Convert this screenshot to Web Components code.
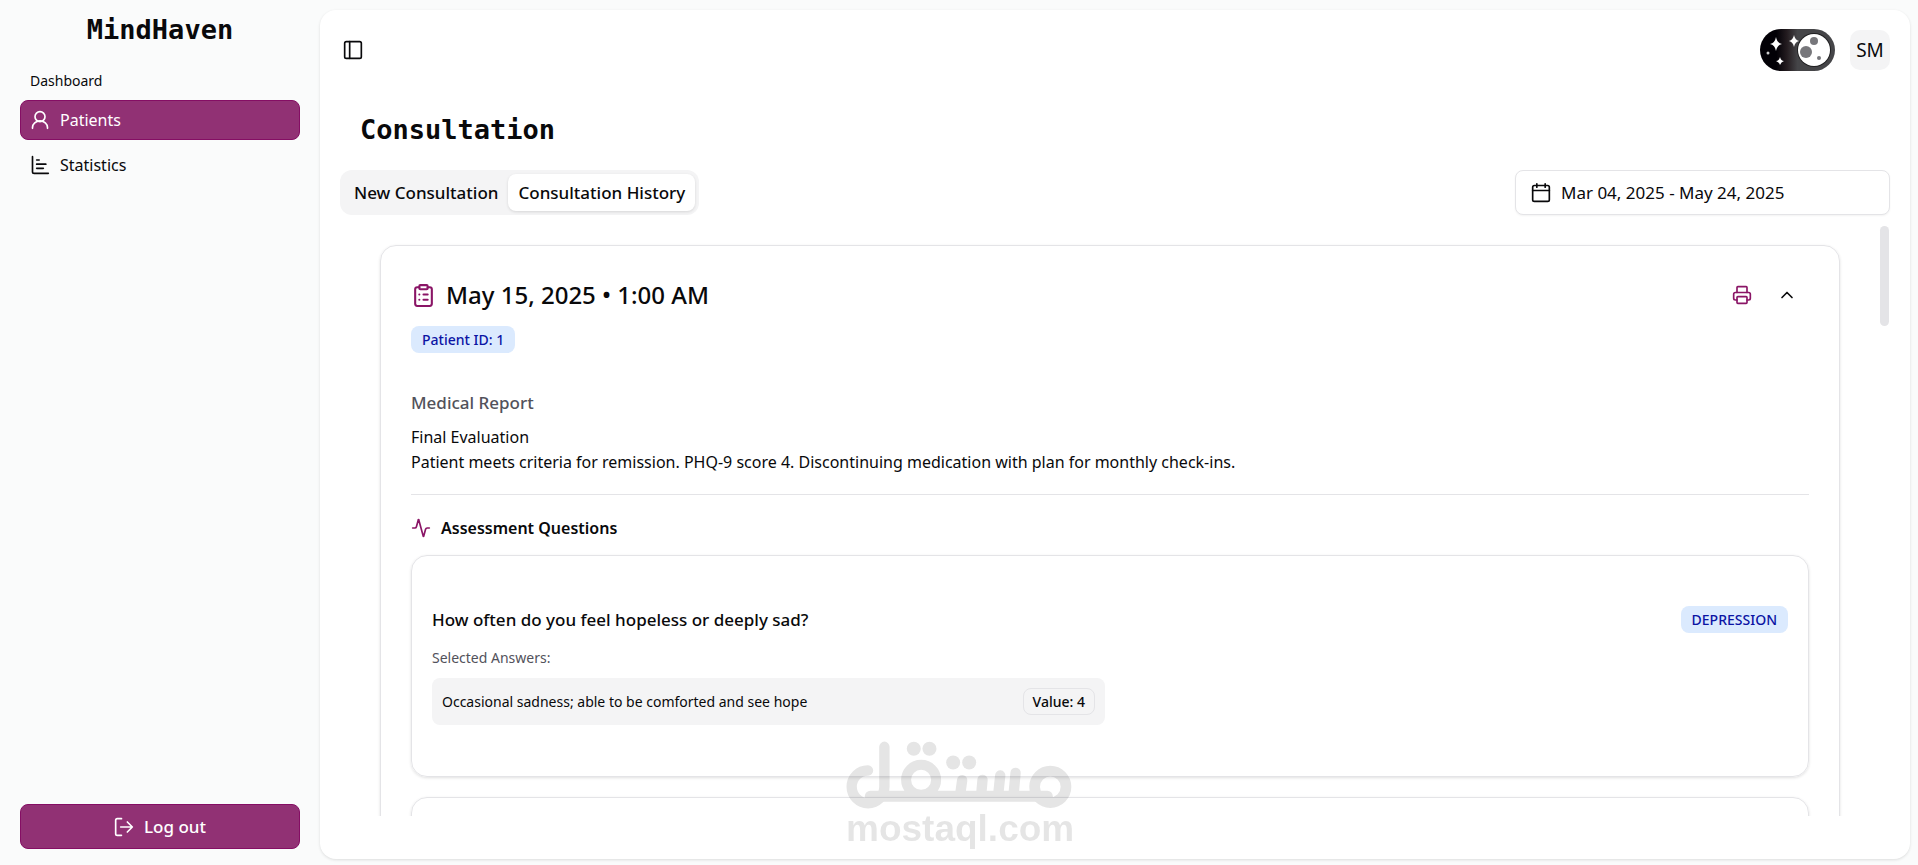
<!DOCTYPE html>
<html lang="en">
<head>
<meta charset="utf-8">
<meta name="viewport" content="width=device-width, initial-scale=1">
<title>MindHaven – Consultation</title>
<style>
  :root {
    --brand: #913174;
    --brand-edge: #850e64;
    --brand-ink: #8a1566;
    --ink: #09090b;
    --muted: #52525b;
    --line: #e4e4e7;
    --soft: #f4f4f5;
    --badge-bg: #dbeafe;
    --badge-ink: #0b14a4;
    --text: 17px;
    --body: 16px;
    --small: 14px;
    --mono: "DejaVu Sans Mono", monospace;
    --shadow: 0 1px 3px rgba(0, 0, 0, .12);
  }
  body {
    margin: 0;
    background: #fafbfb;
    color: var(--ink);
    font: 400 var(--text)/24px "Noto Sans", "Open Sans", sans-serif;
  }
</style>
</head>
<body>
<mh-app>
  <mh-sidebar slot="sidebar">
    <mh-nav-item icon="user" active>Patients</mh-nav-item>
    <mh-nav-item icon="chart">Statistics</mh-nav-item>
  </mh-sidebar>
  <mh-topbar slot="top" initials="SM"></mh-topbar>
  <mh-heading slot="top">Consultation</mh-heading>
  <mh-toolbar slot="top">
    <mh-tab>New Consultation</mh-tab>
    <mh-tab selected>Consultation History</mh-tab>
    <mh-date-range slot="end">Mar 04, 2025 - May 24, 2025</mh-date-range>
  </mh-toolbar>
  <mh-scroll-area>
    <mh-consultation>
      <span slot="title">May 15, 2025 • 1:00 AM</span>
      <mh-badge slot="patient">Patient ID: 1</mh-badge>
      <span slot="report">Final Evaluation<br>Patient meets criteria for remission. PHQ-9 score 4. Discontinuing medication with plan for monthly check-ins.</span>
      <mh-question>
        <span slot="question">How often do you feel hopeless or deeply sad?</span>
        <mh-badge slot="topic">DEPRESSION</mh-badge>
        <mh-answer>Occasional sadness; able to be comforted and see hope<mh-badge slot="value" outline>Value: 4</mh-badge></mh-answer>
      </mh-question>
      <mh-question></mh-question>
    </mh-consultation>
  </mh-scroll-area>
</mh-app>
<mh-watermark>mostaql.com</mh-watermark>

<script>
const icons = {
  user: '<circle cx="12" cy="8" r="6"/><path d="M21 22v-1a9 8 0 0 0-18 0v1"/>',
  chart: '<path d="M3 2v18a2 2 0 0 0 2 2h17"/><path d="M8 6h3M8 11h11M8 16h8"/>',
  panel: '<rect x="2" y="2" width="20" height="20" rx="2"/><path d="M8 2v20"/>',
  logout: '<path d="M9 2H4a2 2 0 0 0-2 2v16a2 2 0 0 0 2 2h5"/><path d="M16 6l6 6-6 6M22 12H8"/>',
  calendar: '<path d="M7 1v4M17 1v4"/><rect x="2" y="3" width="20" height="19" rx="2"/><path d="M2 9h20"/>',
  clipboard: '<rect x="8" y="2" width="8" height="4" rx="1"/><path d="M16 4h2a2 2 0 0 1 2 2v14a2 2 0 0 1-2 2H6a2 2 0 0 1-2-2V6a2 2 0 0 1 2-2h2"/><path d="M12 11h4M12 16h4M8 11h.01M8 16h.01"/>',
  printer: '<path d="M6 18H4a2 2 0 0 1-2-2v-5a2 2 0 0 1 2-2h16a2 2 0 0 1 2 2v5a2 2 0 0 1-2 2h-2"/><path d="M6 9V3a1 1 0 0 1 1-1h10a1 1 0 0 1 1 1v6"/><rect x="6" y="14" width="12" height="8" rx="1"/>',
  chevron: '<path d="M18 15l-6-6-6 6"/>',
  pulse: '<path d="M22 12h-2.500a2 2 0 0 0-2 1.500L15.200 21.800a.25.25 0 0 1-.5 0L9.300 2.200a.25.25 0 0 0-.5 0L6.500 10.500A2 2 0 0 1 4.500 12H2"/>'
};

function define(name, html, setup) {
  const template = document.createElement('template');
  template.innerHTML = html;
  customElements.define(name, class extends HTMLElement {
    constructor() {
      super();
      this.attachShadow({ mode: 'open' }).append(template.content.cloneNode(true));
    }
    connectedCallback() { if (setup) setup(this, this.shadowRoot); }
  });
}

define('mh-icon', `
  <style>
    :host { display: block; flex: none; width: 20px; height: 20px; }
    svg { display: block; width: 100%; height: 100%; }
  </style>
  <svg viewBox="0 0 24 24" fill="none" stroke="currentColor" stroke-width="2" stroke-linecap="round" stroke-linejoin="round" aria-hidden="true"></svg>`,
  (host, root) => { root.querySelector('svg').innerHTML = icons[host.getAttribute('name')]; });

define('mh-badge', `
  <style>
    :host { display: inline-block; flex: none; box-sizing: border-box; padding: 3px 11px; border-radius: 8px;
      background: var(--badge-bg); color: var(--badge-ink); font-size: var(--small); font-weight: 500; line-height: 21px; white-space: nowrap; }
    :host([outline]) { padding: 2px 9px; border: 1px solid var(--line); background: none; color: var(--ink); }
  </style><slot></slot>`);

define('mh-app', `
  <style>
    :host { display: grid; grid-template-columns: 320px minmax(0, 1fr); height: 100vh; }
    main { display: flex; flex-direction: column; min-height: 0; margin: 10px 8px 6px 0; padding: 0 20px 43px;
      border-radius: 16px; background: #fff; box-shadow: var(--shadow); }
  </style>
  <slot name="sidebar"></slot>
  <main><slot name="top"></slot><slot></slot></main>`);

define('mh-sidebar', `
  <style>
    :host { display: flex; flex-direction: column; padding: 11px 20px 16px; }
    .brand { font: 700 27px/38px var(--mono); text-align: center; }
    .label { margin: 22px 10px 9px; font-size: var(--small); line-height: 20px; }
    nav { display: grid; gap: 5px; flex: 1; align-content: start; }
    button { display: flex; align-items: center; justify-content: center; gap: 10px; height: 45px; border: 1px solid var(--brand-edge);
      border-radius: 8px; background: var(--brand); color: #fff; font: inherit; font-weight: 500; }
  </style>
  <div class="brand">MindHaven</div>
  <div class="label">Dashboard</div>
  <nav><slot></slot></nav>
  <button type="button"><mh-icon name="logout"></mh-icon>Log out</button>`);

define('mh-nav-item', `
  <style>
    :host { display: block; }
    a { display: flex; align-items: center; gap: 10px; box-sizing: border-box; height: 40px; padding: 0 9px; border: 1px solid transparent;
      border-radius: 8px; color: inherit; font-size: var(--body); text-decoration: none; }
    :host([active]) a { border-color: var(--brand-edge); background: var(--brand); color: #fff; }
  </style>
  <a href="#"><mh-icon></mh-icon><span><slot></slot></span></a>`,
  (host, root) => {
    const icon = root.querySelector('mh-icon');
    icon.setAttribute('name', host.getAttribute('icon'));
    icon.shadowRoot.querySelector('svg').innerHTML = icons[host.getAttribute('icon')];
  });

define('mh-theme-switch', `
  <style>
    :host, label { display: block; position: relative; width: 75px; height: 42px; }
    input { position: absolute; inset: 0; width: 100%; height: 100%; margin: 0; opacity: 0; }
    svg { display: block; }
  </style>
  <label>
    <input type="checkbox" role="switch" aria-label="Dark theme" checked>
    <svg width="75" height="42" viewBox="0 0 75 42" aria-hidden="true">
      <defs>
        <linearGradient id="night"><stop offset=".22" stop-color="#020006"/><stop offset=".36" stop-color="#241c20"/><stop offset=".5" stop-color="#454548"/><stop offset="1" stop-color="#454548"/></linearGradient>
      </defs>
      <rect width="75" height="42" rx="21" fill="url(#night)"/>
      <circle cx="54" cy="21" r="17" fill="#202022"/>
      <circle cx="54" cy="21" r="16" fill="#fff"/>
      <g fill="#77777b"><circle cx="46" cy="23" r="6"/><circle cx="54" cy="12" r="4"/><circle cx="59" cy="29" r="2"/></g>
      <g fill="#fff"><path d="M16 8q1 6 6 7-5 1-6 7-1-6-6-7 5-1 6-7z"/><path d="M34 6q1 5 5 6-4 1-5 6-1-5-5-6 4-1 5-6z"/><path d="M20 28q1 4 4 4-3 1-4 4-1-3-4-4 3 0 4-4z"/><circle cx="8" cy="24" r="1.500" opacity=".8"/></g>
    </svg>
  </label>`);

define('mh-topbar', `
  <style>
    :host { display: flex; align-items: center; gap: 15px; margin-top: 19px; }
    button { border: 0; background: none; color: inherit; font: inherit; }
    .panel { margin-right: auto; padding: 3px; }
    .avatar { width: 40px; height: 40px; padding: 0; border-radius: 10px; background: var(--soft); font-size: 19px; }
  </style>
  <button class="panel" type="button" aria-label="Toggle sidebar"><mh-icon name="panel"></mh-icon></button>
  <mh-theme-switch></mh-theme-switch>
  <button class="avatar" type="button"></button>`,
  (host, root) => { root.querySelector('.avatar').textContent = host.getAttribute('initials'); });

define('mh-heading', `
  <style>
    :host { display: block; padding: 40px 20px 21px; }
    h1 { margin: 0; font: 700 27px/38px var(--mono); }
  </style><h1><slot></slot></h1>`);

define('mh-toolbar', `
  <style>
    :host { display: flex; justify-content: space-between; margin-bottom: 10px; }
    .tabs { display: flex; padding: 4px; border-radius: 12px; background: var(--soft); }
  </style>
  <div class="tabs" role="tablist"><slot></slot></div><slot name="end"></slot>`);

define('mh-tab', `
  <style>
    :host { display: block; }
    button { height: 37px; padding: 0 10px; border: 0; border-radius: 8px; background: none; color: inherit; font: inherit; font-weight: 500; }
    :host([selected]) button { background: #fff; box-shadow: var(--shadow); }
  </style><button type="button" role="tab"><slot></slot></button>`,
  (host, root) => root.querySelector('button').setAttribute('aria-selected', host.hasAttribute('selected')));

define('mh-date-range', `
  <style>
    :host { display: block; width: 375px; }
    button { display: flex; align-items: center; gap: 10px; width: 100%; height: 45px; padding: 0 15px; border: 1px solid var(--line);
      border-radius: 8px; background: #fff; box-shadow: 0 1px 2px rgba(0, 0, 0, .05); color: inherit; font: inherit; }
  </style><button type="button"><mh-icon name="calendar"></mh-icon><span><slot></slot></span></button>`);

define('mh-scroll-area', `
  <style>
    :host { display: flex; flex: 1; min-height: 0; }
    .view { flex: 1; min-width: 0; overflow: hidden; padding: 20px 40px; }
    .track { width: 10px; padding: 1px 1px 1px 0; box-sizing: border-box; }
    .thumb { height: 100px; border-radius: 5px; background: var(--line); }
  </style>
  <div class="view"><slot></slot></div>
  <div class="track"><div class="thumb"></div></div>`);

define('mh-consultation', `
  <style>
    :host { display: block; padding: 30px; border: 1px solid var(--line); border-radius: 16px; box-shadow: var(--shadow); }
    header { display: flex; align-items: center; }
    header mh-icon { width: 25px; height: 25px; color: var(--brand-ink); }
    h2 { flex: 1; margin: 0 0 0 10px; font-size: 24px; font-weight: 500; line-height: 38px; }
    button { display: grid; place-items: center; width: 45px; height: 38px; padding: 0; border: 0; background: none; color: inherit; }
    button mh-icon { width: 20px; height: 20px; }
    button[aria-expanded] mh-icon { color: inherit; }
    .patient { display: flex; margin-top: 12px; }
    h3 { margin: 37px 0 10px; color: var(--muted); font-size: var(--text); font-weight: 500; line-height: 25px; }
    p { margin: 0; font-size: var(--body); line-height: 25px; }
    h4 { display: flex; align-items: center; gap: 10px; margin: 19px 0 0; padding-top: 20px; border-top: 1px solid var(--line);
      font-size: var(--body); font-weight: 600; line-height: 26px; }
    h4 mh-icon { color: var(--brand-ink); }
    .questions { display: grid; gap: 20px; margin-top: 14px; }
  </style>
  <header>
    <mh-icon name="clipboard"></mh-icon>
    <h2><slot name="title"></slot></h2>
    <button type="button" aria-label="Print"><mh-icon name="printer"></mh-icon></button>
    <button type="button" aria-label="Collapse" aria-expanded="true"><mh-icon name="chevron"></mh-icon></button>
  </header>
  <div class="patient"><slot name="patient"></slot></div>
  <h3>Medical Report</h3>
  <p><slot name="report"></slot></p>
  <h4><mh-icon name="pulse"></mh-icon>Assessment Questions</h4>
  <div class="questions"><slot></slot></div>`);

define('mh-question', `
  <style>
    :host { display: block; min-height: 120px; padding: 50px 20px; border: 1px solid var(--line); border-radius: 16px; box-shadow: var(--shadow); }
    .top { display: flex; align-items: center; justify-content: space-between; }
    .question { font-weight: 500; line-height: 27px; }
    .label { margin: 15px 0 10px; color: var(--muted); font-size: var(--small); line-height: 20px; }
    .answers { display: grid; grid-template-columns: repeat(2, minmax(0, 1fr)); gap: 10px; }
    :host(:empty) .label { visibility: hidden; }
  </style>
  <div class="top"><div class="question"><slot name="question"></slot></div><slot name="topic"></slot></div>
  <div class="label">Selected Answers:</div>
  <div class="answers"><slot></slot></div>`);

define('mh-answer', `
  <style>
    :host { display: flex; align-items: center; justify-content: space-between; box-sizing: border-box; height: 47px; padding: 0 10px;
      border-radius: 8px; background: var(--soft); font-size: var(--small); }
  </style><span><slot></slot></span><slot name="value"></slot>`);

define('mh-watermark', `
  <style>
    :host { position: fixed; left: 50%; bottom: 16px; width: 226px; transform: translateX(-50%); opacity: .1; color: #000; pointer-events: none;
      font: 700 37px/40px "Liberation Sans", sans-serif; text-align: center; }
    svg { display: block; width: 226px; height: 68px; }
  </style>
  <svg viewBox="77 40 677 203" fill="none" stroke="#000" stroke-linecap="round" aria-hidden="true">
    <circle cx="689" cy="177" r="47" stroke-width="32"/>
    <path d="M150 205H680" stroke-width="33"/>
    <path d="M143 128a48 49 0 0 0-49 49 49 49 0 0 0 98 0V57" stroke-width="31"/>
    <circle cx="302" cy="156" r="45" stroke-width="30"/>
    <path d="M425 157l-6 43M486 156l-4 44M539 143l-6 57M585 135l-6 65" stroke-width="31"/>
    <g fill="#000" stroke="none"><circle cx="280" cy="63" r="21"/><circle cx="327" cy="63" r="21"/><circle cx="398" cy="104" r="21"/><circle cx="446" cy="104" r="21"/></g>
  </svg>
  <slot></slot>`);
</script>
</body>
</html>
